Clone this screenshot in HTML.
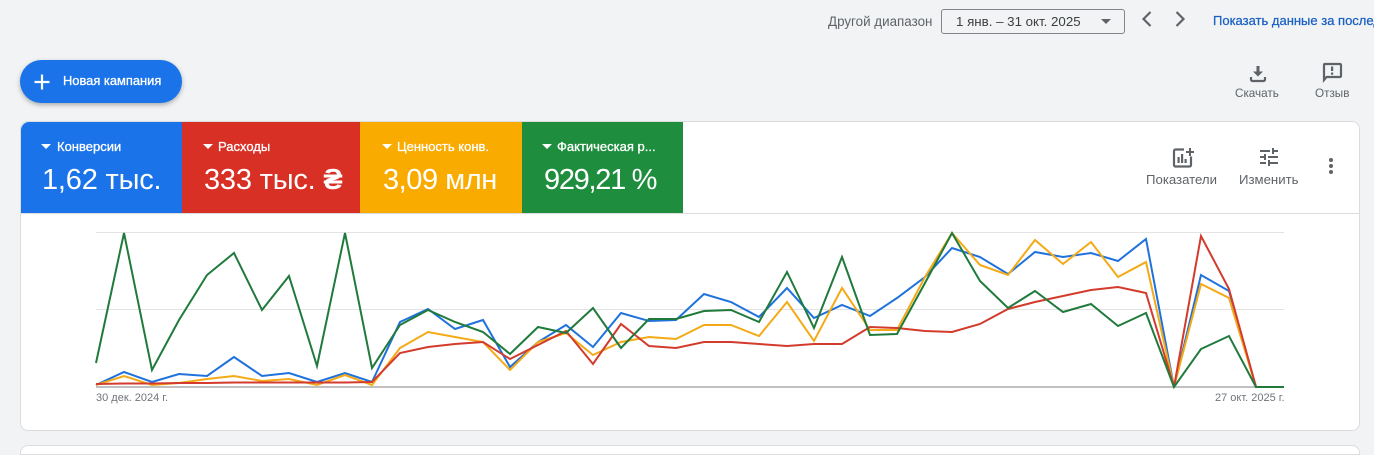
<!DOCTYPE html>
<html lang="ru"><head><meta charset="utf-8"><title>Кампании</title>
<style>
html,body{margin:0;padding:0;width:1374px;height:447px;overflow:hidden;background:#f1f3f4;font-family:"Liberation Sans",sans-serif;}
.t{position:absolute;white-space:nowrap;line-height:16px}
svg{position:absolute;display:block}
.card{position:absolute;left:20px;top:121px;width:1338px;height:308px;background:#fff;border:1px solid #dadce0;border-radius:8px;overflow:hidden}
.tile{position:absolute;top:122px;height:91px;color:#fff}
.lab{position:absolute;top:17px;font-size:13px;-webkit-text-stroke:.3px #fff;white-space:nowrap;line-height:16px}
.val{position:absolute;top:40px;font-size:29px;line-height:36px;white-space:nowrap;letter-spacing:-.2px}
.tri{position:absolute;top:22px;width:0;height:0;border-left:5px solid transparent;border-right:5px solid transparent;border-top:5px solid #fff}
</style></head><body>

<div class="t" style="left:828px;top:14px;font-size:13.4px;color:#5f6368">Другой диапазон</div>
<div style="position:absolute;left:941px;top:9px;width:182px;height:23px;border:1px solid #80868b;border-radius:3px"></div>
<div class="t" style="left:956px;top:14px;font-size:13.3px;color:#3c4043">1 янв. – 31 окт. 2025</div>
<div style="position:absolute;left:1101px;top:19px;width:0;height:0;border-left:5px solid transparent;border-right:5px solid transparent;border-top:5px solid #5f6368"></div>
<svg style="left:1137px;top:9px" width="20" height="20" viewBox="0 0 20 20"><path d="M13.500 3L6.500 10l7 7" fill="none" stroke="#5f6368" stroke-width="2.200"/></svg>
<svg style="left:1170px;top:9px" width="20" height="20" viewBox="0 0 20 20"><path d="M6.500 3l7 7-7 7" fill="none" stroke="#5f6368" stroke-width="2.200"/></svg>
<div class="t" style="left:1213px;top:13px;font-size:13px;-webkit-text-stroke:.25px #1a5fc4;color:#1a5fc4;width:161px;overflow:hidden">Показать данные за последние</div>

<div style="position:absolute;left:20px;top:60px;width:162px;height:43px;border-radius:22px;background:#1a73e8;box-shadow:0 2px 5px rgba(60,64,67,.4)"></div>
<svg style="left:30px;top:70px" width="24" height="24" viewBox="0 0 24 24"><path d="M12 4.500v15M4.500 12h15" stroke="#fff" stroke-width="2.200"/></svg>
<div class="t" style="left:63px;top:73px;font-size:12.900px;-webkit-text-stroke:.3px #fff;color:#fff">Новая кампания</div>

<svg style="left:1246px;top:61px" width="24" height="24" viewBox="0 0 24 24" fill="#5f6368"><path d="M10.500 5h3v5.500H17L12 15.500 7 10.500h3.500z"/><path d="M5 16v2.500A1.500 1.500 0 0 0 6.500 20h11a1.500 1.500 0 0 0 1.500-1.500V16" fill="none" stroke="#5f6368" stroke-width="2.200"/></svg>
<div class="t" style="left:1235px;top:86px;font-size:11.700px;color:#5f6368">Скачать</div>
<svg style="left:1320px;top:60px" width="24" height="24" viewBox="0 0 24 24"><path d="M4.500 4h15.500a1 1 0 0 1 1 1v11a1 1 0 0 1-1 1H6.500L4 20V5a1 1 0 0 1 .5-1z" fill="none" stroke="#5f6368" stroke-width="2.200"/><path d="M11 6.500h2.200v4.500H11zM11 12.500h2.200v2.200H11z" fill="#5f6368"/></svg>
<div class="t" style="left:1315px;top:86px;font-size:11.700px;color:#5f6368">Отзыв</div>

<div class="card"></div>
<div style="position:absolute;left:21px;top:213px;width:1338px;height:1px;background:#dadce0"></div>

<div class="tile" style="left:21px;width:161px;background:#1a73e8;border-top-left-radius:8px">
<div class="tri" style="left:20px"></div><div class="lab" style="left:36px">Конверсии</div><div class="val" style="left:21px">1,62 тыс.</div></div>
<div class="tile" style="left:182px;width:178px;background:#d93025">
<div class="tri" style="left:21px"></div><div class="lab" style="left:36px">Расходы</div><div class="val" style="left:22px">333 тыс. <b>₴</b></div></div>
<div class="tile" style="left:360px;width:162px;background:#f9ab00">
<div class="tri" style="left:22px"></div><div class="lab" style="left:37px">Ценность конв.</div><div class="val" style="left:23px;letter-spacing:-.45px">3,09 млн</div></div>
<div class="tile" style="left:522px;width:161px;background:#1e8e3e">
<div class="tri" style="left:20px"></div><div class="lab" style="left:35px">Фактическая р...</div><div class="val" style="left:22px;letter-spacing:-1.300px">929,21 %</div></div>

<svg style="left:1170px;top:145px" width="24" height="24" viewBox="0 0 24 24"><path d="M14 4.500H5.500A1.500 1.500 0 0 0 4 6v14a1.500 1.500 0 0 0 1.500 1.500h14A1.500 1.500 0 0 0 21 20v-8.500" fill="none" stroke="#5f6368" stroke-width="2.200"/><path d="M7.500 12h2.200v6H7.500zM11 9h2.200v9H11zM14.500 14h2.200v4h-2.200zM19 3h2v3h3v2h-3v3h-2V8h-3V6h3z" fill="#5f6368"/></svg>
<div class="t" style="left:1146px;top:172px;font-size:13.200px;color:#5f6368">Показатели</div>
<svg style="left:1257px;top:145px" width="24" height="24" viewBox="0 0 24 24" fill="#5f6368"><path d="M3 17v2h6v-2H3zM3 5v2h10V5H3zm10 16v-2h8v-2h-8v-2h-2v6h2zM7 9v2H3v2h4v2h2V9H7zm14 4v-2H11v2h10zm-6-4h2V7h4V5h-4V3h-2v6z"/></svg>
<div class="t" style="left:1239px;top:172px;font-size:13.200px;color:#5f6368">Изменить</div>
<svg style="left:1319px;top:154px" width="24" height="24" viewBox="0 0 24 24" fill="#5f6368"><circle cx="12" cy="6" r="2"/><circle cx="12" cy="12" r="2"/><circle cx="12" cy="18" r="2"/></svg>

<svg style="left:0;top:0" width="1374" height="447" viewBox="0 0 1374 447" fill="none" stroke-width="2" stroke-linejoin="miter">
<path d="M96 232.500H1284M96 309.500H1284" stroke="#e3e3e3" stroke-width="1"/>
<path d="M96 387H1284" stroke="#ababab" stroke-width="1.500"/>
<polyline stroke="#1f72dc" points="96,385 124,372 152,382 179,374 207,376 234,357 262,376 289,373 317,382 345,373 372,382 400,322 428,309 455,329 483,320 510,367 538,342 566,325 593,347 621,313 649,321 676,320 704,294 731,302 759,317 787,288 814,318 842,305 870,316 897,298 925,277 952,248 980,257 1008,274 1035,252 1063,257 1091,253 1118,261 1146,239 1174,387 1201,275 1229,291 1256,387 1284,387"/>
<polyline stroke="#f4aa16" points="96,385 124,376 152,385 179,383 207,379 234,376 262,381 289,379 317,385 345,375 372,385 400,348 428,332 455,337 483,342 510,370 538,342 566,333 593,355 621,342 649,337 676,339 704,325 731,325 759,336 787,302 814,341 842,288 870,330 897,330 925,277 952,233 980,265 1008,275 1035,240 1063,264 1091,242 1118,277 1146,262 1174,387 1201,284 1229,298 1256,387 1284,387"/>
<polyline stroke="#d33b2c" points="96,384 124,383.500 152,383.500 179,383 207,383 234,382.500 262,382.500 289,382.500 317,382.500 345,382.500 372,382 400,353 428,347 455,344 483,342 510,359 538,345 566,331 593,364 621,324 649,346 676,348 704,342 731,342 759,344 787,346 814,344 842,344 870,327 897,328 925,331 952,332 980,324 1008,309 1035,302 1063,296 1091,290 1118,287 1146,293 1174,387 1201,236 1229,289 1256,387 1284,387"/>
<polyline stroke="#207a3c" points="96,363 124,233 152,370 179,320 207,275 234,253 262,310 289,276 317,366 345,233 372,368 400,325 428,310 455,322 483,332 510,354 538,327 566,333 593,308 621,348 649,319 676,319 704,311 731,310 759,322 787,272 814,328 842,257 870,335 897,334 925,283 952,233 980,281 1008,308 1035,291 1063,312 1091,304 1118,326 1146,313 1174,387 1201,349 1229,336 1256,387 1284,387"/>
</svg>

<div class="t" style="left:96px;top:390px;font-size:11px;color:#70757a">30 дек. 2024 г.</div>
<div class="t" style="left:1215px;top:390px;font-size:11px;color:#70757a">27 окт. 2025 г.</div>

<div style="position:absolute;left:20px;top:445px;width:1338px;height:8px;background:#fff;border:1px solid #dadce0;border-radius:8px 8px 0 0"></div>
</body></html>
